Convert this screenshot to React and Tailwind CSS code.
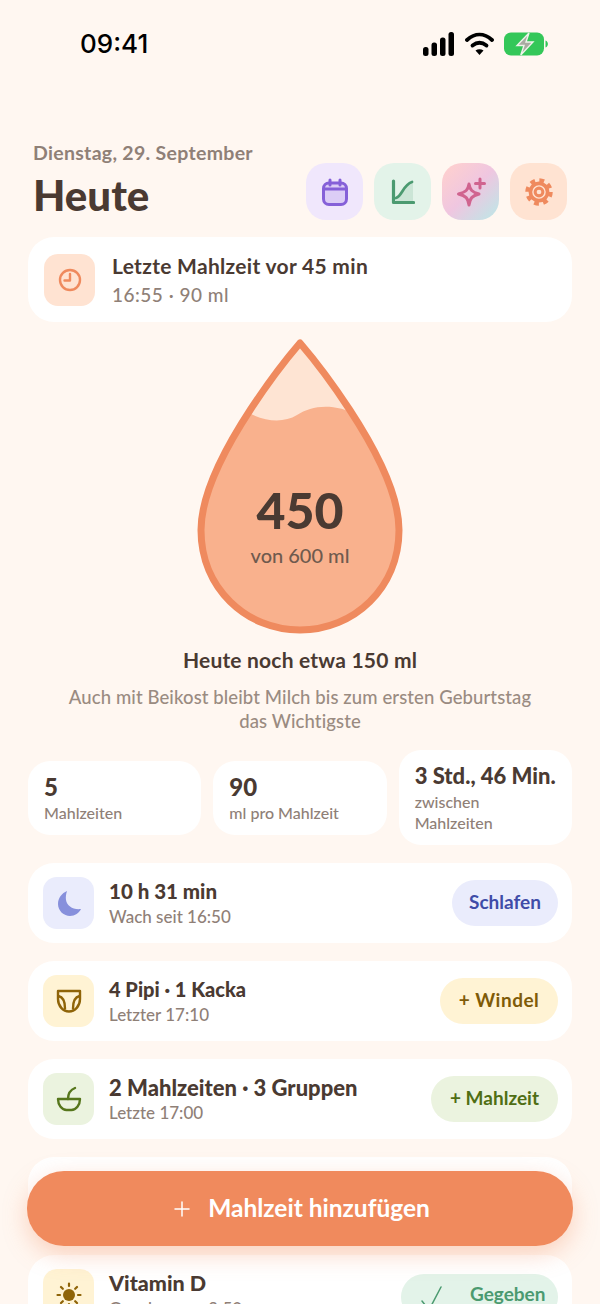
import { Plus } from 'lucide-react'

const body = "font-['Lato',sans-serif]"

function StatusBar() {
  return (
    <div className="flex h-[88px] items-center justify-between pl-[80px] pr-[52px]">
      <span className="font-['Inter',sans-serif] text-[26px] font-medium leading-none text-black">09:41</span>
      <div className="flex items-center gap-[10px]">
        <svg width="32" height="24" viewBox="0 0 32 24" fill="#000">
          <rect x="0" y="15" width="5.500" height="9" rx="2.500" />
          <rect x="8.500" y="10.500" width="5.500" height="13.500" rx="2.500" />
          <rect x="17" y="5.500" width="5.500" height="18.500" rx="2.500" />
          <rect x="25.500" y="0" width="5.500" height="24" rx="2.500" />
        </svg>
        <svg width="29" height="24" viewBox="0 0 29 24" fill="none" stroke="#000" strokeWidth="3.800" strokeLinecap="round">
          <path d="M2 8C10 .8 19 .8 27 8" />
          <path d="M7.500 13.500C12 10 17 10 21.500 13.500" />
          <path d="M14.500 23l-4-4.600c2.400-1.600 5.600-1.600 8 0z" fill="#000" stroke="none" />
        </svg>
        <svg width="44" height="24" viewBox="0 0 44 24">
          <rect x="0" y="0.500" width="40" height="23" rx="7" fill="#34C759" />
          <path d="M41.500 8.500c1.600.6 2.400 2 2.400 3.500s-.8 2.900-2.400 3.500z" fill="#34C759" />
          <path d="M25 1 13 13.500h7l-3.200 9.500 12.200-13h-7z" fill="#A9ABA2" stroke="#EEF3EA" strokeWidth="1.400" />
        </svg>
      </div>
    </div>
  )
}

function CalendarIcon() {
  return (
    <svg width="26" height="28" viewBox="0 0 26 28" fill="none" stroke="#8560D8" strokeWidth="3" strokeLinecap="round">
      <rect x="1.500" y="5" width="23" height="21.500" rx="5.500" fill="#DCCDF6" />
      <path d="M2.500 11h21M8 2v5M18 2v5" />
    </svg>
  )
}

function ChartIcon() {
  return (
    <svg width="24" height="26" viewBox="0 0 24 26" fill="none" stroke="#4B9A70" strokeLinecap="round" strokeLinejoin="round">
      <path d="M5 21C11 19 12 6 22 3V23H5z" fill="#CBE5D6" stroke="none" />
      <path d="M2.500 2V23.500H22.500" strokeWidth="3.200" />
      <path d="M5 19C11 17 12 6 21 3" strokeWidth="2.800" />
    </svg>
  )
}

function SparkleIcon() {
  return (
    <svg width="30" height="30" viewBox="0 0 30 30" fill="none" stroke="#D0648F" strokeWidth="3" strokeLinejoin="round" strokeLinecap="round">
      <path d="M13 7C14 13 16 15 23 17 16 19 14 21 13 28 12 21 10 19 2.500 17 10 15 12 13 13 7z" />
      <path d="M24 2v9M19.500 6.500h9" />
    </svg>
  )
}

function GearIcon() {
  return (
    <svg width="28" height="28" viewBox="0 0 26 26" fill="none" stroke="#EF8A5E">
      <circle cx="13" cy="13" r="10.500" strokeWidth="4.500" strokeDasharray="4.300 3.950" />
      <circle cx="13" cy="13" r="8" strokeWidth="3.400" />
      <circle cx="13" cy="13" r="3.600" strokeWidth="2.800" />
    </svg>
  )
}

function NavButton({ className, children }) {
  return <div className={`flex h-[57px] w-[57px] items-center justify-center rounded-[20px] ${className}`}>{children}</div>
}

function Header() {
  return (
    <div className="mt-[53px] flex items-end justify-between px-[33px]">
      <div>
        <div className="text-[19.500px] font-bold leading-6 tracking-[0.3px] text-[#8F8077]">Dienstag, 29. September</div>
        <h1 className="mt-[5px] text-[42px] font-black leading-[50px] text-[#4A3A32]">Heute</h1>
      </div>
      <div className="flex gap-[11px]">
        <NavButton className="bg-[#F0E7FC]"><CalendarIcon /></NavButton>
        <NavButton className="bg-[#E3F3E9]"><ChartIcon /></NavButton>
        <NavButton className="bg-[linear-gradient(135deg,#FDCFD0_10%,#EFC6E0_50%,#C5E2E6_90%)]"><SparkleIcon /></NavButton>
        <NavButton className="bg-[#FFE3D2]"><GearIcon /></NavButton>
      </div>
    </div>
  )
}

function LastMeal() {
  return (
    <div className="mx-[28px] mt-[17px] flex h-[85px] items-center gap-[17px] rounded-[26px] bg-white pl-[16px]">
      <div className="flex h-[52px] w-[51px] items-center justify-center rounded-[14px] bg-[#FFE3D2]">
        <svg width="24" height="24" viewBox="0 0 24 24" fill="none" stroke="#EF8A5E" strokeWidth="2.400" strokeLinecap="round" strokeLinejoin="round">
          <circle cx="12" cy="12" r="10" />
          <path d="M12 6v6.500H6.500" />
        </svg>
      </div>
      <div>
        <div className="text-[21px] font-bold leading-[28px] tracking-[0.3px] text-[#4A3A32]">Letzte Mahlzeit vor 45 min</div>
        <div className="mt-[2px] text-[19px] font-medium leading-[26px] tracking-[0.5px] text-[#8F8077]">16:55 · 90 ml</div>
      </div>
    </div>
  )
}

const dropPath = 'M300 345C300 345 201 460 201 532 201 590 246 632 300 632 354 632 399 590 399 532 399 460 300 345 300 345z'

function Drop() {
  return (
    <div className="relative mx-auto mt-[14px] h-[298px] w-[208px]">
      <svg width="208" height="298" viewBox="196 338 208 298">
        <defs>
          <clipPath id="dropClip">
            <path d={dropPath} />
          </clipPath>
        </defs>
        <path d={dropPath} fill="#FEE4D3" />
        <g clipPath="url(#dropClip)">
          <path d="M240 410C262 424 282 426 297 417 312 408 332 404 360 418H420V640H180V410z" fill="#F9B18D" />
        </g>
        <path d={dropPath} fill="none" stroke="#EF8A5E" strokeWidth="7" strokeLinejoin="round" />
      </svg>
      <div className="absolute inset-x-0 top-[143px] flex flex-col items-center">
        <div className="text-[50px] font-black leading-[62px] text-[#4A3A32]">450</div>
        <div className="mt-[2px] text-[20px] font-medium leading-[24px] text-[#6F5A4E]">von 600 ml</div>
      </div>
    </div>
  )
}

function Stat({ value, label, small }) {
  return (
    <div className="rounded-[22px] bg-white px-[16px] py-[12px]">
      <div className={`${small ? 'text-[22px]' : 'text-[24px]'} whitespace-nowrap font-black leading-[27px] text-[#4A3A32]`}>{value}</div>
      <div className="mt-[2px] text-[16px] font-medium leading-[21px] text-[#8F8077]">{label}</div>
    </div>
  )
}

function Row({ icon, iconBg, title, titleSize, sub, button }) {
  return (
    <div className="flex h-[80px] shrink-0 items-center justify-between rounded-[26px] bg-white pl-[15px] pr-[14px]">
      <div className="flex items-center gap-[15px]">
        <div className={`flex h-[52px] w-[51px] items-center justify-center rounded-[14px] ${iconBg}`}>{icon}</div>
        <div>
          <div className={`whitespace-nowrap font-black leading-[27px] text-[#4A3A32] ${titleSize}`}>{title}</div>
          <div className="mt-[1px] text-[17px] font-medium leading-[22px] text-[#8F8077]">{sub}</div>
        </div>
      </div>
      {button}
    </div>
  )
}

function Pill({ className, children }) {
  return <div className={`flex h-[46px] items-center justify-center rounded-[23px] pb-[2px] text-[19px] font-bold ${className}`}>{children}</div>
}

export default function App() {
  return (
    <div className={`relative h-[1304px] w-[600px] overflow-hidden bg-[#FFF7F1] ${body}`}>
      <StatusBar />
      <Header />
      <LastMeal />
      <Drop />
      <div className="mt-[12px] text-center text-[21px] font-bold leading-[28px] tracking-[0.2px] text-[#4A3A32]">Heute noch etwa 150 ml</div>
      <div className="mx-auto mt-[11px] w-[480px] text-center text-[18.500px] font-medium leading-[24px] tracking-[0.1px] text-[#9A8B81]">
        Auch mit Beikost bleibt Milch bis zum ersten Geburtstag das Wichtigste
      </div>
      <div className="mx-[28px] mt-[17px] grid grid-cols-3 items-center gap-[12px]">
        <Stat value="5" label="Mahlzeiten" />
        <Stat value="90" label="ml pro Mahlzeit" />
        <Stat small value="3 Std., 46 Min." label="zwischen Mahlzeiten" />
      </div>
      <div className="mx-[28px] mt-[18px] flex flex-col gap-[18px]">
        <Row
          iconBg="bg-[#EAECFC]"
          title="10 h 31 min"
          titleSize="text-[20.500px]"
          sub="Wach seit 16:50"
          icon={
            <svg width="26" height="28" viewBox="0 0 26 28">
              <path d="M11 2C6 4 2 9 2 15c0 7 6 12 12 12 5 0 9-3 11-7-8 1-14-3-15-9-.4-3 0-6 1-9z" fill="#8790DC" />
            </svg>
          }
          button={<Pill className="w-[106px] bg-[#EAECFC] text-[#3F4CA8]">Schlafen</Pill>}
        />
        <Row
          iconBg="bg-[#FFF3D4]"
          title="4 Pipi · 1 Kacka"
          titleSize="text-[20px]"
          sub="Letzter 17:10"
          icon={
            <svg width="26" height="26" viewBox="0 0 26 26" fill="none" stroke="#8F6408" strokeWidth="2.400" strokeLinecap="round" strokeLinejoin="round">
              <path d="M2 3H24V11C24 18 19 23.500 13 23.500S2 18 2 11z" />
              <path d="M2.500 8C7 9 9 13 9 20.500M23.500 8C19 9 17 13 17 20.500" />
            </svg>
          }
          button={<Pill className="w-[118px] bg-[#FFF3D4] tracking-[0.5px] text-[#7F5B08]">+ Windel</Pill>}
        />
        <Row
          iconBg="bg-[#EBF3DF]"
          title="2 Mahlzeiten · 3 Gruppen"
          titleSize="text-[22px]"
          sub="Letzte 17:00"
          icon={
            <svg width="26" height="26" viewBox="0 0 26 26" fill="none" stroke="#56761C" strokeWidth="2.400" strokeLinecap="round" strokeLinejoin="round">
              <path d="M2 13H24C24 19 20 24 15.500 24H10.500C6 24 2 19 2 13z" />
              <path d="M12 13C12 8 14 4 19 2" />
            </svg>
          }
          button={<Pill className="w-[127px] bg-[#EBF3DF] text-[#4F6E14]">+ Mahlzeit</Pill>}
        />
        <Row iconBg="bg-white" title="" titleSize="" sub="" icon={null} button={null} />
        <Row
          iconBg="bg-[#FFF3D4]"
          title="Vitamin D"
          titleSize="text-[21.500px]"
          sub="Gegeben um 9:50"
          icon={
            <svg width="26" height="26" viewBox="0 0 26 26" fill="#8F6408" stroke="#8F6408" strokeWidth="2.200" strokeLinecap="round">
              <circle cx="13" cy="13" r="6" stroke="none" />
              <path d="M13 1.500v2.500M13 22v2.500M1.500 13h2.500M22 13h2.500M5 5l1.800 1.800M21 5l-1.800 1.800M5 21l1.800-1.800M21 21l-1.800-1.800" />
            </svg>
          }
          button={
            <div className="mt-[4px] flex h-[46px] w-[157px] items-start gap-[26px] rounded-[23px] bg-[#E3F3E9] pl-[19px] pt-[6px] text-[19px] font-bold text-[#4B9A70]">
              <svg width="24" height="28" viewBox="0 0 24 28" fill="none" stroke="#4B9A70" strokeWidth="1.500" strokeLinecap="round" strokeLinejoin="round" className="mt-[4px]">
                <path d="M2 17L9 26 21 3" />
              </svg>
              <span>Gegeben</span>
            </div>
          }
        />
      </div>
      <div className="absolute left-[27px] right-[27px] top-[1171px] flex h-[75px] items-center justify-center gap-[14px] rounded-[37px] bg-[#F08A5D] text-[24.500px] font-bold text-white shadow-[0_8px_24px_rgba(240,138,93,0.35)]">
        <Plus size={24} strokeWidth={1.500} />
        <span>Mahlzeit hinzufügen</span>
      </div>
    </div>
  )
}
